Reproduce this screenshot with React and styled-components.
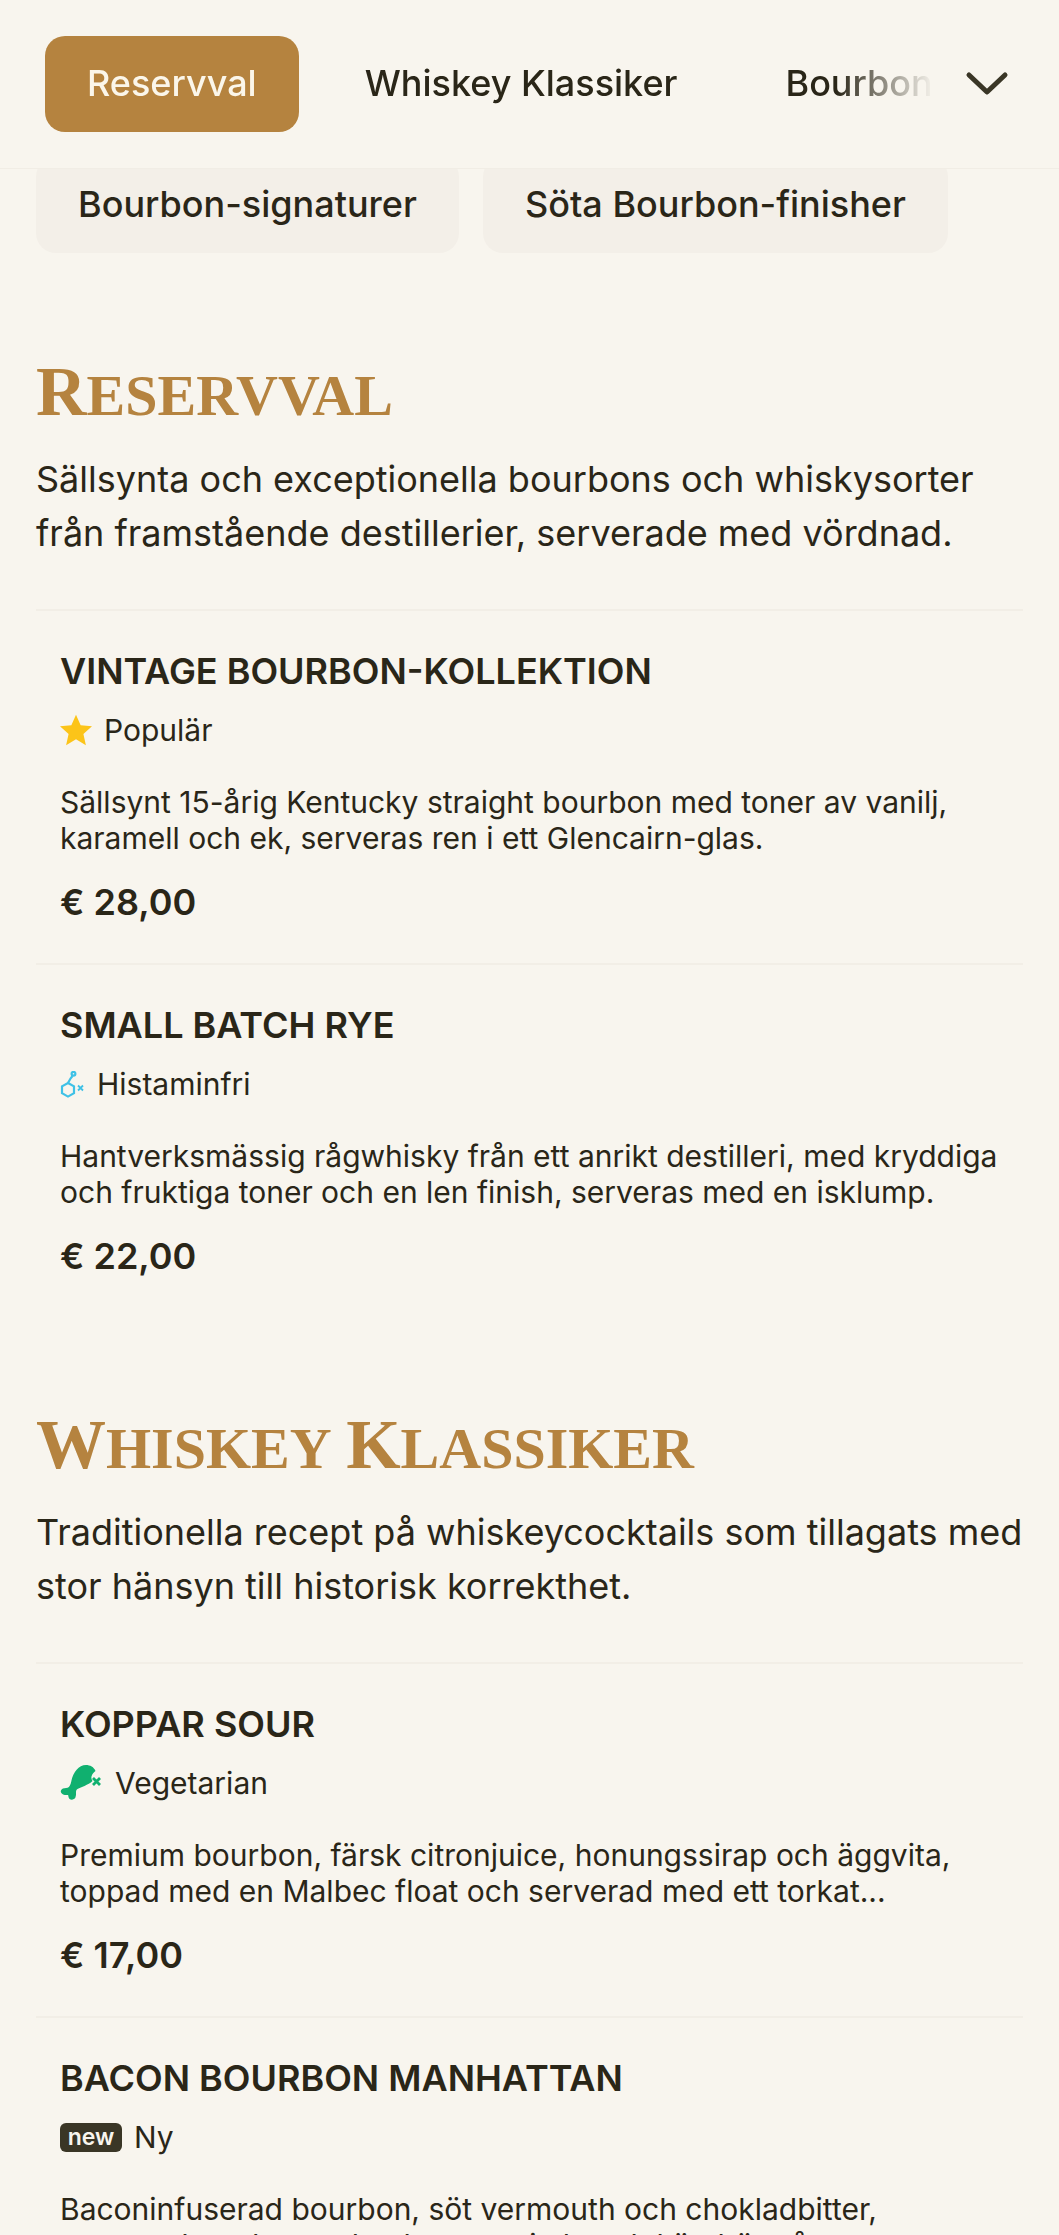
import styled, { createGlobalStyle } from "styled-components";

const GlobalStyle = createGlobalStyle`
    html, body {
        margin: 0;
        height: 2235px;
        overflow: hidden;
        background-color: #f8f5ee;
        font-family: "Inter", "Liberation Sans", sans-serif;
        color: #2a2618;
    }
`

const Header = styled.header`
    position: sticky;
    top: 0;
    z-index: 10;
    height: 168px;
    display: flex;
    align-items: center;
    padding: 0 49px 0 45px;
    background-color: #f8f5ee;
    border-bottom: 1px solid #f1ede5;
`
const Tabs = styled.nav`
    flex: 1;
    min-width: 0;
    display: flex;
    gap: 24px;
    overflow: hidden;
    mask-image: linear-gradient(to right, #000 89%, transparent 100%);
`
const Tab = styled.div`
    flex-shrink: 0;
    height: 96px;
    padding: 0 42px 2px;
    box-sizing: border-box;
    display: flex;
    align-items: center;
    border-radius: 20px;
    font-size: 36px;
    font-weight: 500;
    white-space: nowrap;
    background-color: ${props => props.$active ? "#b5833f" : "transparent"};
    color: ${props => props.$active ? "#fbf6ea" : "#2a2618"};
`
const Chevron = styled.svg`
    width: 46px;
    height: 28px;
    margin-left: 30px;
    flex-shrink: 0;
`
const SubNav = styled.div`
    display: flex;
    gap: 24px;
    margin-top: -12px;
    padding-left: 36px;
`
const Pill = styled.div`
    height: 96px;
    padding: 0 42px 2px;
    box-sizing: border-box;
    display: flex;
    align-items: center;
    border-radius: 20px;
    background-color: #f3efe8;
    font-size: 36px;
    font-weight: 500;
    white-space: nowrap;
`
const Section = styled.section`
    padding: 0 36px;
    margin-top: ${props => props.$top}px;
`
const SectionTitle = styled.h2`
    margin: 0;
    font-family: "Liberation Serif", serif;
    font-size: 58px;
    line-height: 80px;
    font-weight: 700;
    text-transform: uppercase;
    color: #b5833f;
`
const TitleWord = styled.span`
    display: inline-block;
    &::first-letter {
        font-size: 70px;
    }
`
const SectionText = styled.p`
    margin: 16px 0 0;
    font-size: 36px;
    line-height: 54px;
`
const ItemList = styled.div`
    margin-top: 49px;
`
const Item = styled.article`
    padding: 38px 24px 38px;
    border-top: 2px solid #f2eee6;
`
const ItemName = styled.h3`
    margin: 0;
    font-size: 36px;
    line-height: 44px;
    font-weight: 600;
    text-transform: uppercase;
`
const TagRow = styled.div`
    margin-top: 15px;
    height: 44px;
    display: flex;
    align-items: center;
    gap: 12px;
    font-size: 30px;
`
const NewBadge = styled.span`
    display: inline-flex;
    align-items: center;
    justify-content: center;
    width: 62px;
    height: 29px;
    border-radius: 6px;
    background-color: #3a3626;
    color: #f8f5ee;
    font-size: 23px;
    font-weight: 600;
`
const ItemText = styled.p`
    margin: 32px 0 0;
    font-size: 30px;
    line-height: 36px;
`
const Price = styled.div`
    margin-top: 23px;
    font-size: 36px;
    line-height: 46px;
    font-weight: 600;
`

const StarIcon = () => (
    <svg width="32" height="32" viewBox="1 1 22 22">
        <path fill="#fcc419" d="M12 1.5l3.2 7.2 7.8.8-5.9 5.2 1.7 7.8L12 18.4l-6.8 4.1 1.7-7.8L1 9.5l7.8-.8z" />
    </svg>
)

const HistamineIcon = () => (
    <svg width="25" height="27" viewBox="0 0 25 27" fill="none" stroke="#3fc1e6" strokeWidth="2.2">
        <path d="M8 12l6 3.4v6.8L8 25.6l-6-3.4v-6.8z" />
        <path d="M8 12l2.5-4.5 2-2.5" />
        <circle cx="13.5" cy="2.8" r="1.9" />
        <path d="M18 14.5l5 5M23 14.5l-5 5" strokeWidth="1.8" />
    </svg>
)

const DrumstickIcon = () => (
    <svg width="43" height="38" viewBox="0 0 43 38">
        <path fill="#10b06f" d="M26 1c4 0 8 2 9.500 6-1.500 1-3.500 3-4 5.500-.3 1.500 0 3 1 4.500-2 2-5 3.500-8 5-2.500 1.200-5 2-7 3-1 .6-1.500 1.500-1.500 3 0 2 .2 3.500-.6 5.500-1 2-4 3-5.800 1.500-1-1-1.200-2.500-1.500-4-1.500-.3-3 .2-5-.6-2.500-1.200-3-3.500-1.500-5 1.600-1.500 4-1 6-1.600 2-.8 3-3 3.600-6C12.500 10 18 1 26 1z" />
        <path d="M33 14l7 7M40 14l-7 7" stroke="#10b06f" strokeWidth="2.8" fill="none" />
    </svg>
)

const sections = [
    {
        title: "Reservval",
        top: 99,
        text: "Sällsynta och exceptionella bourbons och whiskysorter från framstående destillerier, serverade med vördnad.",
        items: [
            {
                name: "Vintage Bourbon-kollektion",
                tag: <StarIcon />,
                label: "Populär",
                text: "Sällsynt 15-årig Kentucky straight bourbon med toner av vanilj, karamell och ek, serveras ren i ett Glencairn-glas.",
                price: "€ 28,00",
            },
            {
                name: "Small Batch Rye",
                tag: <HistamineIcon />,
                label: "Histaminfri",
                text: "Hantverksmässig rågwhisky från ett anrikt destilleri, med kryddiga och fruktiga toner och en len finish, serveras med en isklump.",
                price: "€ 22,00",
            },
        ],
    },
    {
        title: "Whiskey Klassiker",
        top: 88,
        text: "Traditionella recept på whiskeycocktails som tillagats med stor hänsyn till historisk korrekthet.",
        items: [
            {
                name: "Koppar Sour",
                tag: <DrumstickIcon />,
                label: "Vegetarian",
                text: "Premium bourbon, färsk citronjuice, honungssirap och äggvita, toppad med en Malbec float och serverad med ett torkat...",
                price: "€ 17,00",
            },
            {
                name: "Bacon Bourbon Manhattan",
                tag: <NewBadge>new</NewBadge>,
                label: "Ny",
                text: "Baconinfuserad bourbon, söt vermouth och chokladbitter, garnerad med ett torkat baconstrimla och körsbär på spett",
                price: "€ 19,00",
            },
        ],
    },
]

export default function App() {
    return (
        <>
            <GlobalStyle />
            <Header>
                <Tabs>
                    <Tab $active>Reservval</Tab>
                    <Tab>Whiskey Klassiker</Tab>
                    <Tab>Bourbon-signaturer</Tab>
                </Tabs>
                <Chevron viewBox="0 0 46 28" fill="none" stroke="#3a3626" strokeWidth="5" strokeLinecap="round" strokeLinejoin="round">
                    <path d="M5 5l18 17L41 5" />
                </Chevron>
            </Header>
            <SubNav>
                <Pill>Bourbon-signaturer</Pill>
                <Pill>Söta Bourbon-finisher</Pill>
            </SubNav>
            {sections.map((section) => (
                <Section key={section.title} $top={section.top}>
                    <SectionTitle>
                        {section.title.split(" ").map((word, i) => (
                            <span key={word}>{i > 0 && " "}<TitleWord>{word}</TitleWord></span>
                        ))}
                    </SectionTitle>
                    <SectionText>{section.text}</SectionText>
                    <ItemList>
                        {section.items.map((item) => (
                            <Item key={item.name}>
                                <ItemName>{item.name}</ItemName>
                                <TagRow>{item.tag}{item.label}</TagRow>
                                <ItemText>{item.text}</ItemText>
                                <Price>{item.price}</Price>
                            </Item>
                        ))}
                    </ItemList>
                </Section>
            ))}
        </>
    )
}
